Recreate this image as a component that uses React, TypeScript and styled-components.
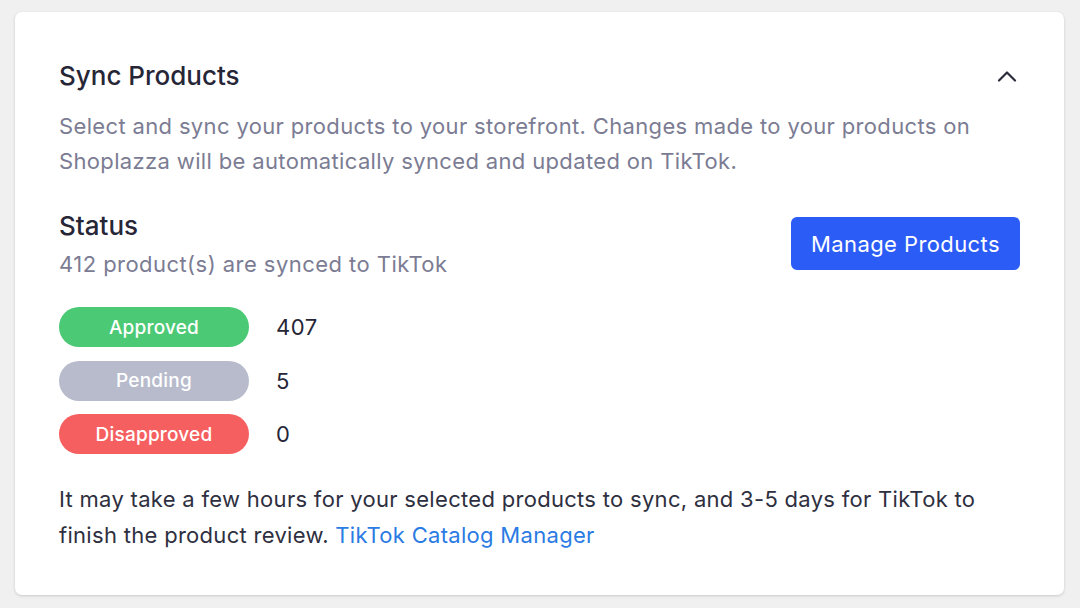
import styled, { createGlobalStyle } from 'styled-components';

const statuses = [
  { label: 'Approved', count: 407, color: '#4bc974' },
  { label: 'Pending', count: 5, color: '#b7bbcc' },
  { label: 'Disapproved', count: 0, color: '#f65f60' },
];

function App() {
  return (
    <>
      <GlobalStyle />
      <StyledPage>
        <StyledCard>
          <StyledHeader>
            <StyledTitle>Sync Products</StyledTitle>
            <StyledToggle aria-label="Collapse">
              <svg width="20" height="12" viewBox="0 0 20 12" fill="none">
                <path d="M2 10.5L10 2.5L18 10.5" stroke="#2b2c3a" strokeWidth="2.2" strokeLinecap="round" strokeLinejoin="round" />
              </svg>
            </StyledToggle>
          </StyledHeader>

          <StyledDescription>
            Select and sync your products to your storefront. Changes made to your products on Shoplazza will be
            automatically synced and updated on TikTok.
          </StyledDescription>

          <StyledStatusRow>
            <div>
              <StyledSubtitle>Status</StyledSubtitle>
              <StyledSynced>412 product(s) are synced to TikTok</StyledSynced>
            </div>
            <StyledButton>Manage Products</StyledButton>
          </StyledStatusRow>

          <StyledList>
            {statuses.map((item) => (
              <StyledItem key={item.label}>
                <StyledBadge $color={item.color}>{item.label}</StyledBadge>
                <StyledCount>{item.count}</StyledCount>
              </StyledItem>
            ))}
          </StyledList>

          <StyledNote>
            It may take a few hours for your selected products to sync, and 3-5 days for TikTok to finish the product
            review. <StyledLink href="#">TikTok Catalog Manager</StyledLink>
          </StyledNote>
        </StyledCard>
      </StyledPage>
    </>
  );
}

export default App;

const GlobalStyle = createGlobalStyle`
  body {
    margin: 0;
    background: #f0f0f1;
    font-family: Inter, 'Noto Sans', sans-serif;
  }
`;

const StyledPage = styled.div`
  width: 1080px;
  height: 608px;
  padding: 12px 16px 13px 15px;
  box-sizing: border-box;
`;

const StyledCard = styled.div`
  height: 100%;
  box-sizing: border-box;
  background: #ffffff;
  border-radius: 7px;
  box-shadow: 0 1px 3px rgba(0, 0, 0, 0.16);
  padding: 47px 44px 0 44px;
`;

const StyledHeader = styled.div`
  display: flex;
  align-items: center;
  justify-content: space-between;
`;

const StyledTitle = styled.h2`
  margin: 0;
  font-size: 26px;
  line-height: 34px;
  font-weight: 500;
  color: #262637;
`;

const StyledToggle = styled.button`
  display: flex;
  padding: 0;
  margin-right: 3px;
  border: none;
  background: none;
  cursor: pointer;
`;

const StyledDescription = styled.p`
  margin: 16px 0 0;
  font-size: 22px;
  line-height: 35px;
  letter-spacing: 0.35px;
  color: #7b7c93;
`;

const StyledStatusRow = styled.div`
  display: flex;
  align-items: flex-start;
  justify-content: space-between;
  margin-top: 30px;
`;

const StyledSubtitle = styled.div`
  font-size: 26px;
  line-height: 34px;
  font-weight: 500;
  color: #262637;
`;

const StyledSynced = styled.div`
  margin-top: 6px;
  font-size: 22px;
  line-height: 30px;
  letter-spacing: 0.45px;
  color: #7b7c93;
`;

const StyledButton = styled.button`
  width: 229px;
  height: 53px;
  margin-top: 8px;
  border: none;
  border-radius: 6px;
  background: #2b5cf6;
  color: #ffffff;
  font-family: Inter, 'Noto Sans', sans-serif;
  font-size: 22px;
  letter-spacing: 0.4px;
  cursor: pointer;
`;

const StyledList = styled.div`
  display: flex;
  flex-direction: column;
  gap: 13.5px;
  margin-top: 28px;
`;

const StyledItem = styled.div`
  display: flex;
  align-items: center;
  gap: 27px;
`;

const StyledBadge = styled.span<{ $color: string }>`
  display: flex;
  align-items: center;
  justify-content: center;
  width: 190px;
  height: 40px;
  border-radius: 20px;
  background: ${(p) => p.$color};
  color: #ffffff;
  font-size: 19px;
  font-weight: 500;
  letter-spacing: 0.2px;
`;

const StyledCount = styled.span`
  font-size: 22px;
  letter-spacing: 0.5px;
  color: #262637;
`;

const StyledNote = styled.p`
  margin: 27px 0 0;
  font-size: 22px;
  line-height: 36px;
  letter-spacing: 0.3px;
  color: #2e2f40;
`;

const StyledLink = styled.a`
  color: #2a7be3;
  text-decoration: none;
`;
